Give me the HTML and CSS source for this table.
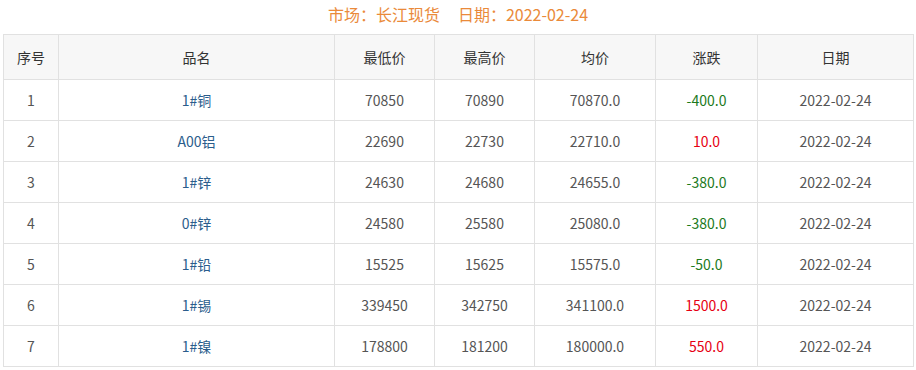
FILE: index.html
```html
<!DOCTYPE html>
<html lang="zh-CN">

<head>
  <meta charset="UTF-8" />
  <meta name="viewport" content="width=device-width, initial-scale=1.0" />
  <title>长江现货</title>
  <link rel="stylesheet" href="styles.css">
</head>

<body>
  <div class="wrap">
    <!-- market + date heading -->
    <h3 class="title">市场：长江现货<span class="gap"></span>日期：2022-02-24</h3>

    <table class="price-table">
      <thead>
        <tr>
          <th class="c-no">序号</th>
          <th class="c-name">品名</th>
          <th class="c-low">最低价</th>
          <th class="c-high">最高价</th>
          <th class="c-avg">均价</th>
          <th class="c-chg">涨跌</th>
          <th class="c-date">日期</th>
        </tr>
      </thead>
      <tbody>
        <tr>
          <td>1</td><td class="name">1#铜</td><td>70850</td><td>70890</td><td>70870.0</td>
          <td class="down">-400.0</td><td>2022-02-24</td>
        </tr>
        <tr>
          <td>2</td><td class="name">A00铝</td><td>22690</td><td>22730</td><td>22710.0</td>
          <td class="up">10.0</td><td>2022-02-24</td>
        </tr>
        <tr>
          <td>3</td><td class="name">1#锌</td><td>24630</td><td>24680</td><td>24655.0</td>
          <td class="down">-380.0</td><td>2022-02-24</td>
        </tr>
        <tr>
          <td>4</td><td class="name">0#锌</td><td>24580</td><td>25580</td><td>25080.0</td>
          <td class="down">-380.0</td><td>2022-02-24</td>
        </tr>
        <tr>
          <td>5</td><td class="name">1#铅</td><td>15525</td><td>15625</td><td>15575.0</td>
          <td class="down">-50.0</td><td>2022-02-24</td>
        </tr>
        <tr>
          <td>6</td><td class="name">1#锡</td><td>339450</td><td>342750</td><td>341100.0</td>
          <td class="up">1500.0</td><td>2022-02-24</td>
        </tr>
        <tr>
          <td>7</td><td class="name">1#镍</td><td>178800</td><td>181200</td><td>180000.0</td>
          <td class="up">550.0</td><td>2022-02-24</td>
        </tr>
      </tbody>
    </table>
  </div>
</body>

</html>
```

FILE: styles.css
```css
body {
  margin: 0;
  font-family: "Noto Sans CJK SC", "Noto Sans", sans-serif;
  background: #fff;
  color: #555;
}

.wrap {
  padding: 0 3px;
}

.title {
  margin: 0;
  height: 34px;
  line-height: 29px;
  text-align: center;
  font-size: 16px;
  font-weight: normal;
  color: #ea8a3a;
}

.title .gap {
  display: inline-block;
  width: 18px;
}

.price-table {
  width: 911px;
  border-collapse: collapse;
  table-layout: fixed;
  font-size: 14px;
}

.price-table th,
.price-table td {
  border: 1px solid #e1e1e1;
  text-align: center;
  padding: 0;
}

.price-table th {
  height: 44px;
  background: #f7f7f7;
  font-weight: normal;
  color: #333;
}

.price-table td {
  height: 40px;
}

.c-no { width: 54px; }
.c-name { width: 275px; }
.c-low { width: 99px; }
.c-high { width: 99px; }
.c-avg { width: 120px; }
.c-chg { width: 101px; }

.name {
  color: #2b5d8c;
}

.up {
  color: #e60012;
}

.down {
  color: #1c7a1c;
}
```
